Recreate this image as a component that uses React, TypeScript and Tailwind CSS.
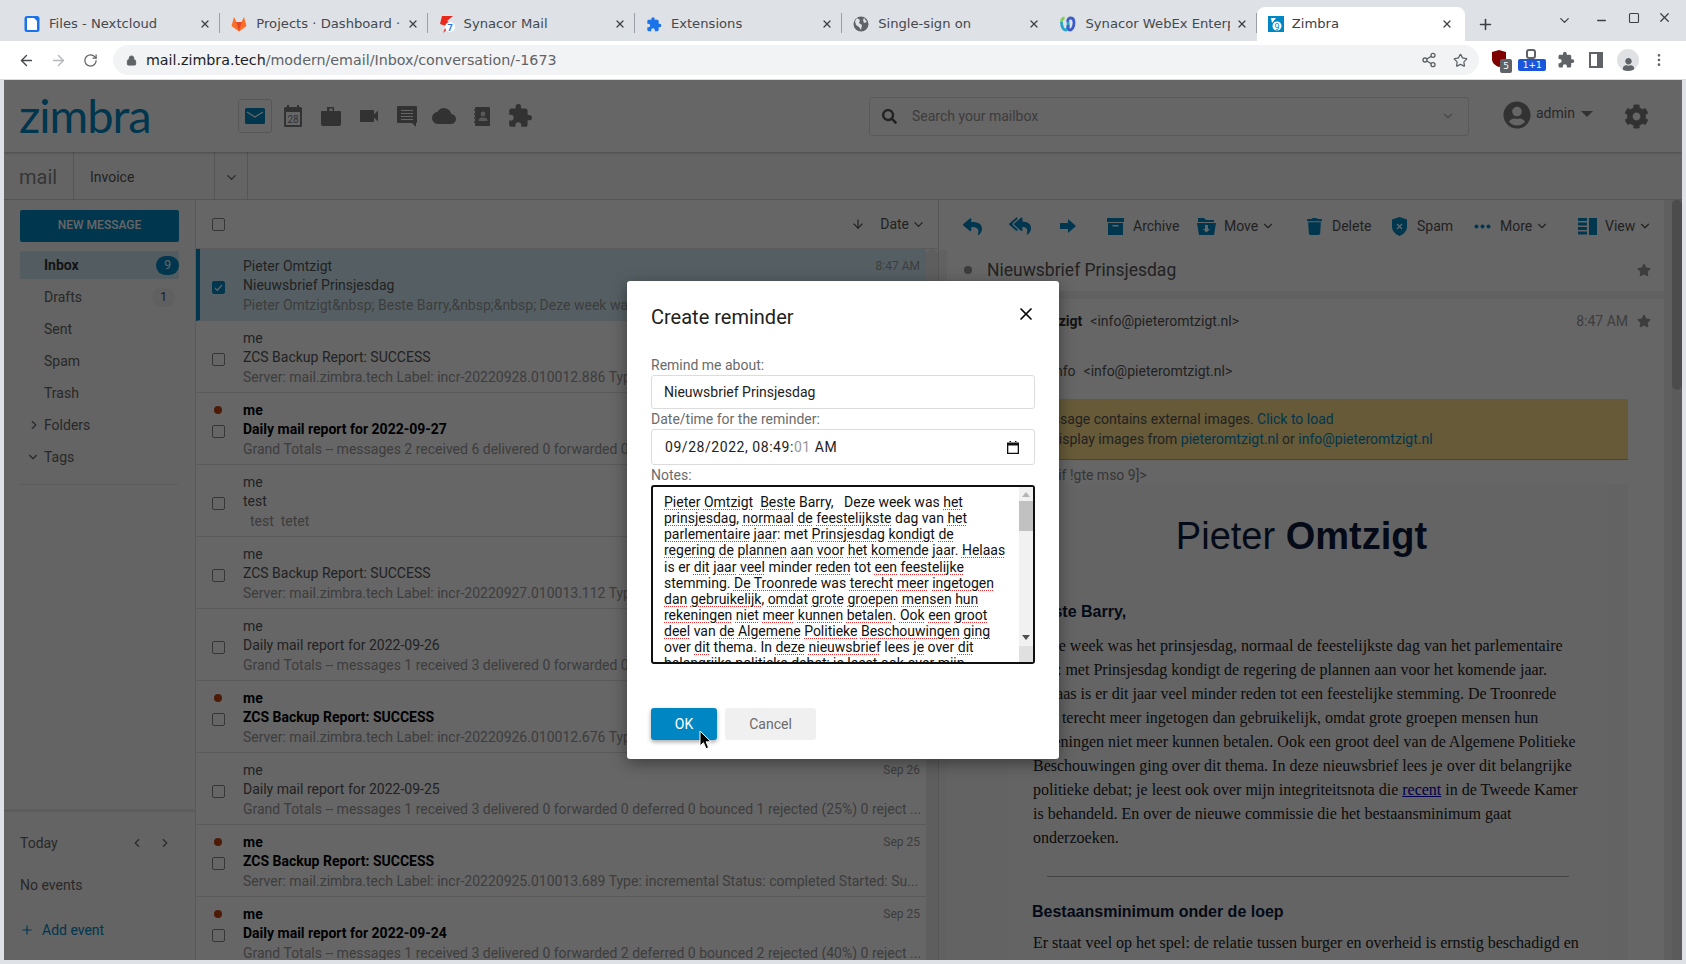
import React from "react";
import { FaReply, FaReplyAll, FaStar, FaTrash, FaCog, FaSearch, FaUser, FaUserCircle } from "react-icons/fa";
import { MdExtension, MdCloud, MdVideocam } from "react-icons/md";
import { ArrowLeft, ArrowRight, RotateCw, Lock, Share2, Star, Plus, X, ChevronDown, ChevronRight, ChevronLeft, ArrowDown, Minus, MoreVertical, Square } from "lucide-react";

interface Msg {
    from: string;
    subject: string;
    excerpt: string;
    date: string;
    unread?: boolean;
    selected?: boolean;
}

const messages: Msg[] = [
    { from: "Pieter Omtzigt", subject: "Nieuwsbrief Prinsjesdag", excerpt: "Pieter Omtzigt&nbsp; Beste Barry,&nbsp;&nbsp; Deze week was het prinsjesdag, normaal de feestelijkste dag van het", date: "8:47 AM", selected: true },
    { from: "me", subject: "ZCS Backup Report: SUCCESS", excerpt: "Server: mail.zimbra.tech Label: incr-20220928.010012.886 Type: incremental Status: completed Started: Su...", date: "Sep 28" },
    { from: "me", subject: "Daily mail report for 2022-09-27", excerpt: "Grand Totals -- messages 2 received 6 delivered 0 forwarded 0 deferred 0 bounced 1 rejected (14%) 0 reject ...", date: "Sep 27", unread: true },
    { from: "me", subject: "test", excerpt: "\u00a0\u00a0test\u00a0\u00a0tetet", date: "Sep 27" },
    { from: "me", subject: "ZCS Backup Report: SUCCESS", excerpt: "Server: mail.zimbra.tech Label: incr-20220927.010013.112 Type: incremental Status: completed Started: Su...", date: "Sep 27" },
    { from: "me", subject: "Daily mail report for 2022-09-26", excerpt: "Grand Totals -- messages 1 received 3 delivered 0 forwarded 0 deferred 0 bounced 1 rejected (25%) 0 reject ...", date: "Sep 26" },
    { from: "me", subject: "ZCS Backup Report: SUCCESS", excerpt: "Server: mail.zimbra.tech Label: incr-20220926.010012.676 Type: incremental Status: completed Started: Su...", date: "Sep 26", unread: true },
    { from: "me", subject: "Daily mail report for 2022-09-25", excerpt: "Grand Totals -- messages 1 received 3 delivered 0 forwarded 0 deferred 0 bounced 1 rejected (25%) 0 reject ...", date: "Sep 26" },
    { from: "me", subject: "ZCS Backup Report: SUCCESS", excerpt: "Server: mail.zimbra.tech Label: incr-20220925.010013.689 Type: incremental Status: completed Started: Su...", date: "Sep 25", unread: true },
    { from: "me", subject: "Daily mail report for 2022-09-24", excerpt: "Grand Totals -- messages 1 received 3 delivered 0 forwarded 2 deferred 0 bounced 2 rejected (40%) 0 reject ...", date: "Sep 25", unread: true },
];

const folders = ["Drafts", "Sent", "Spam", "Trash"];

const noteLines = [
    "Pieter Omtzigt\u00a0\u00a0Beste Barry,\u00a0\u00a0\u00a0Deze week was het",
    "prinsjesdag, normaal de feestelijkste dag van het",
    "parlementaire jaar: met Prinsjesdag kondigt de",
    "regering de plannen aan voor het komende jaar. Helaas",
    "is er dit jaar veel minder reden tot een feestelijke",
    "stemming. De Troonrede was terecht meer ingetogen",
    "dan gebruikelijk, omdat grote groepen mensen hun",
    "rekeningen niet meer kunnen betalen. Ook een groot",
    "deel van de Algemene Politieke Beschouwingen ging",
    "over dit thema. In deze nieuwsbrief lees je over dit",
    "belangrijke politieke debat; je leest ook over mijn",
];

// words the spell checker left alone
const okWords = ["Barry", "Deze", "week", "was", "dag", "van", "met", "is", "er", "minder", "tot", "stemming", "over", "thema", "In", "lees"];

const NoteLine = ({ text }: { text: string }) => (
    <div className="whitespace-pre h-[16.15px] leading-[16.15px]">
        {text.split(/([A-Za-z]+)/).map((w, i) =>
            !/^[A-Za-z]+$/.test(w) || okWords.includes(w) ? (
                <span key={i}>{w}</span>
            ) : (
                <span key={i} className="underline decoration-dotted decoration-[#e83030] decoration-1 underline-offset-[2px]">{w}</span>
            )
        )}
    </div>
);

const MailIcon = () => (
    <svg width="20" height="20" viewBox="0 0 20 20">
        <rect x="0" y="2" width="20" height="16" rx="1.5" fill="#0087c3" />
        <path d="M2 6l8 5 8-5" fill="none" stroke="#fff" strokeWidth="1.4" />
    </svg>
);

const CalIcon = () => (
    <svg width="18" height="22" viewBox="0 0 18 22">
        <rect x="0" y="2" width="18" height="20" rx="1.5" fill="#7d7d7d" />
        <rect x="3" y="0" width="2" height="4" fill="#7d7d7d" />
        <rect x="13" y="0" width="2" height="4" fill="#7d7d7d" />
        <rect x="2" y="7" width="14" height="13" fill="#fff" />
        <text x="9" y="18" textAnchor="middle" fontSize="10" fontFamily="Roboto, sans-serif" fill="#7d7d7d">28</text>
    </svg>
);

const BriefIcon = () => (
    <svg width="20" height="20" viewBox="0 0 20 20" fill="#7d7d7d">
        <path d="M7 1h6v4h6a1 1 0 011 1v12a2 2 0 01-2 2H2a2 2 0 01-2-2V6a1 1 0 011-1h5V1zm1.4 1.4V5h3.2V2.4H8.4z" fillRule="evenodd" />
    </svg>
);

const ChatIcon = () => (
    <svg width="21" height="21" viewBox="0 0 21 21">
        <path d="M1 0h18a1 1 0 011 1v15a1 1 0 01-1 1v4l-4-4H1a1 1 0 01-1-1V1a1 1 0 011-1z" fill="#7d7d7d" />
        <path d="M4 4.500h12M4 7.500h12M4 10.500h12M4 13.500h12" stroke="#fff" strokeWidth="1.2" />
    </svg>
);

const ContactIcon = () => (
    <svg width="16" height="19" viewBox="0 0 16 19">
        <rect x="1" y="0" width="15" height="19" rx="1" fill="#7d7d7d" />
        <path d="M0 3h3M0 7h3M0 11h3M0 15h3" stroke="#7d7d7d" strokeWidth="1.6" />
        <path d="M0.5 3h2M0.5 7h2M0.5 11h2M0.5 15h2" stroke="#bbb" strokeWidth="0.6" />
        <circle cx="9" cy="7" r="2.4" fill="#ddd" />
        <path d="M4.5 14c0-3 2-3.6 4.5-3.6s4.5.6 4.5 3.6z" fill="#ddd" />
    </svg>
);

const ForwardIcon = () => (
    <svg width="16" height="14" viewBox="0 0 16 14" fill="#0087c3"><path d="M0 4h8V0l8 7-8 7v-4H0z" /></svg>
);

const ArchiveIcon = () => (
    <svg width="17" height="17" viewBox="0 0 17 17" fill="#0087c3">
        <rect x="0" y="0" width="17" height="4" />
        <path d="M1 5h15v12H1zM5.5 7v1.6h6V7z" fillRule="evenodd" />
    </svg>
);

const MoveIcon = () => (
    <svg width="19" height="17" viewBox="0 0 19 17" fill="#0087c3">
        <path d="M1 0h6l2 2h8v2H1z" />
        <path d="M0 5h19l-2 12H2zM8 7v4H6l3.5 3.5L13 11h-2V7z" fillRule="evenodd" />
    </svg>
);

const ShieldIcon = () => (
    <svg width="15" height="19" viewBox="0 0 15 19">
        <path d="M7.5 0l7.5 2.5v7c0 4.5-3.5 7.8-7.5 9.5C3.5 17.300 0 14 0 9.500v-7z" fill="#0087c3" />
        <path d="M5 7l5 5M10 7l-5 5" stroke="#fff" strokeWidth="1.3" />
    </svg>
);

const ViewIcon = () => (
    <svg width="19" height="17" viewBox="0 0 19 17" fill="#0087c3">
        <rect x="0" y="0" width="9" height="3" />
        <rect x="0" y="4.500" width="9" height="3" />
        <rect x="0" y="9" width="9" height="3" />
        <rect x="0" y="13.500" width="9" height="3" />
        <rect x="11" y="0" width="8" height="17" />
    </svg>
);

const Check = ({ checked }: { checked?: boolean }) => (
    <div className={`w-[13px] h-[13px] rounded-[2px] border flex items-center justify-center ${checked ? "bg-[#0087c3] border-[#0087c3]" : "border-[#888] bg-white"}`}>
        {checked && (
            <svg width="9" height="9" viewBox="0 0 9 9"><path d="M1 5l2.300 2.300L8 2" fill="none" stroke="#fff" strokeWidth="1.2" /></svg>
        )}
    </div>
);

const Favicon = ({ kind }: { kind: string }) => {
    if (kind === "files")
        return (
            <svg width="16" height="16" viewBox="0 0 16 16"><rect x="0.500" y="0" width="15" height="16" rx="2.500" fill="#1a73e8" /><path d="M3 2h7l3 3v9H3z" fill="#fff" /></svg>
        );
    if (kind === "gitlab")
        return (
            <svg width="16" height="16" viewBox="0 0 16 16"><path d="M8 15.500L0.500 10 3 1l2.500 5h5L13 1l2.500 9z" fill="#fc6d26" /><path d="M8 15.500L5.500 6h5z" fill="#e24329" /></svg>
        );
    if (kind === "synacor")
        return (
            <svg width="16" height="17" viewBox="0 0 16 17"><path d="M3 0h11L8 5l6 3-10 9 3-7-6-2z" fill="#e8291c" /><circle cx="11" cy="11" r="5" fill="#fff" /><text x="11" y="14.500" fontSize="9" textAnchor="middle" fontWeight="700" fontFamily="Roboto, sans-serif" fill="#1a73e8">7</text></svg>
        );
    if (kind === "ext") return <MdExtension size={17} color="#1a73e8" />;
    if (kind === "globe")
        return (
            <svg width="16" height="16" viewBox="0 0 16 16"><circle cx="8" cy="8" r="7.500" fill="#5f6368" /><path d="M4 2l3 2-1 3 3 2-1 5-2-3-3-2-1-4zM11 2l3 4-3 1-1-3z" fill="#dee1e6" /></svg>
        );
    if (kind === "webex")
        return (
            <svg width="16" height="16" viewBox="0 0 16 16" fill="none" strokeWidth="2.800"><path d="M1.500 6c0 6 2.500 8 4 8S9 11 8 6" stroke="#28a4c8" /><path d="M8 6c-1-3 1-4 3-4s3 2 3 5c0 4-2 7-4 7S8 11 8 9" stroke="#3c5ccc" /><path d="M1.500 6c0-2 1-4 3-4" stroke="#7fd14a" /></svg>
        );
    return (
        <svg width="16" height="16" viewBox="0 0 16 16"><rect width="16" height="16" fill="#0087c3" /><circle cx="9" cy="10" r="4.500" fill="#fff" /><text x="9" y="13.500" textAnchor="middle" fontSize="9" fontFamily="Roboto, sans-serif" fill="#0087c3">9</text><path d="M3 2h5L4 7z" fill="#fff" /></svg>
    );
};

const tabs = [
    { title: "Files - Nextcloud", icon: "files" },
    { title: "Projects · Dashboard · GitLab", icon: "gitlab" },
    { title: "Synacor Mail", icon: "synacor" },
    { title: "Extensions", icon: "ext" },
    { title: "Single-sign on", icon: "globe" },
    { title: "Synacor WebEx Enterprise", icon: "webex" },
];

const BrowserChrome = () => (
    <div className="shrink-0 font-['DejaVu_Sans',sans-serif] text-[#45494e]">
        <div className="h-[41px] bg-[#dee1e6] flex items-end pl-[13px]">
            {tabs.map((t, i) => (
                <div key={i} className="relative w-[207.300px] h-[34px] flex items-center pl-[11px] pr-[9px]">
                    <div className="w-[16px] flex justify-center shrink-0"><Favicon kind={t.icon} /></div>
                    <span className="ml-[9px] text-[13.150px] whitespace-nowrap overflow-hidden flex-1">{t.title}</span>
                    <X size={12} strokeWidth={2.500} className="ml-[6px] shrink-0 text-[#3c4043]" />
                    {i !== 4 && <div className="absolute right-0 top-[6px] w-px h-[20px] bg-[#9aa0a6]" />}
                </div>
            ))}
            <div className="w-[208px] h-[34px] bg-white rounded-t-[8px] flex items-center pl-[11px] pr-[9px] text-[#3c4043]">
                <Favicon kind="zimbra" />
                <span className="ml-[8px] text-[13.150px] flex-1">Zimbra</span>
                <X size={12} strokeWidth={2.500} className="mr-[3px]" />
            </div>
            <div className="h-[34px] flex items-center ml-[12px] text-[#3c4043]">
                <Plus size={17} strokeWidth={2.200} />
            </div>
            <div className="h-[41px] flex-1 flex items-center justify-end pr-[14px] text-[#3c4043]">
                <ChevronDown size={15} className="-ml-[1px]" />
                <Minus size={13} strokeWidth={2.500} className="ml-[23px]" />
                <Square size={12} strokeWidth={2.200} className="ml-[20px] -mt-[6px]" />
                <X size={15} className="ml-[17px] -mt-[6px]" />
            </div>
        </div>
        <div className="h-[39px] bg-white flex items-center pl-[18px] pr-[19px] text-[#5f6368] border-b border-[#dadce0]">
            <ArrowLeft size={17} className="text-[#45494e] mt-[1px]" />
            <ArrowRight size={17} className="ml-[15px] text-[#b5b8bb] mt-[1px]" />
            <RotateCw size={15} className="ml-[16px] mt-[1px]" />
            <div className="ml-[15px] w-[1369px] h-[30px] rounded-full bg-[#f1f3f4] flex items-center pl-[13px] pr-[11px]">
                <Lock size={11} fill="#5f6368" className="shrink-0" />
                <span className="ml-[9px] mt-[1px] text-[14.250px] flex-1 whitespace-nowrap">
                    <span className="text-[#202124]">mail.zimbra.tech</span>/modern/email/Inbox/conversation/-1673
                </span>
                <Share2 size={16} />
                <Star size={15} className="ml-[16px]" />
            </div>
            <div className="relative ml-[13px] w-[18px] h-[20px]">
                <svg width="14" height="17" viewBox="0 0 14 17"><path d="M7 0l7 2v7c0 4-3 6.500-7 8-4-1.500-7-4-7-8V2z" fill="#800000" /></svg>
                <div className="absolute left-[8px] top-[9px] w-[12px] h-[14px] bg-[#5f6368] rounded-[2px] text-white text-[9px] leading-[14px] text-center">5</div>
            </div>
            <div className="relative ml-[8px] w-[26px] h-[22px] flex justify-center">
                <div className="w-[10px] h-[10px] border-2 border-[#5f6368] rounded-[3px]" />
                <div className="absolute left-0 top-[10px] w-[28px] h-[12px] bg-[#1a56db] rounded-[2px] text-white text-[9px] leading-[12px] text-center">1+1</div>
            </div>
            <MdExtension size={18} className="ml-[13px]" />
            <div className="ml-[14px] w-[14px] h-[16px] border-2 border-[#5f6368] flex justify-end"><div className="w-[4px] bg-[#5f6368]" /></div>
            <div className="ml-[14px] w-[22px] h-[22px] rounded-full bg-[#dfe1e5] flex items-end justify-center overflow-hidden"><FaUser size={13} /></div>
            <MoreVertical size={16} className="ml-[12px]" />
        </div>
    </div>
);

const AppHeader = () => (
    <div className="h-[72px] shrink-0 bg-white flex items-center shadow-[0_1px_3px_rgba(0,0,0,0.25)] relative z-10">
        <div className="ml-[15px] w-[219px] -mt-[2px] font-['Lato',sans-serif] font-normal text-[47px] leading-none tracking-[-1px] text-[#0087c3]">zimbra</div>
        <div className="w-[34px] h-[34px] border border-[#d8d8d8] rounded-[3px] flex items-center justify-center"><MailIcon /></div>
        <div className="flex items-center ml-[12px]"><div className="w-[18px] flex justify-center"><CalIcon /></div></div>
        <div className="ml-[19px]"><BriefIcon /></div>
        <div className="ml-[16px]"><MdVideocam size={24} color="#7d7d7d" /></div>
        <div className="ml-[16px]"><ChatIcon /></div>
        <div className="ml-[14px]"><MdCloud size={24} color="#7d7d7d" /></div>
        <div className="ml-[18px]"><ContactIcon /></div>
        <div className="ml-[17px]"><MdExtension size={26} color="#7d7d7d" /></div>
        <div className="ml-[336px] w-[600px] h-[39px] border border-[#e0e0e0] rounded-[3px] flex items-center pl-[12px] pr-[13px]">
            <FaSearch size={15} className="text-[#555]" />
            <span className="ml-[15px] text-[14px] text-[#999] flex-1">Search your mailbox</span>
            <ChevronDown size={14} className="text-[#aaa]" />
        </div>
        <div className="ml-[34px] flex items-center -mt-[3px]">
            <FaUserCircle size={28} color="#7d7d7d" />
            <span className="ml-[5px] text-[14px] text-[#666] -mt-[2px]">admin</span>
            <div className="ml-[6px] -mt-[2px] w-0 h-0 border-l-[6px] border-r-[6px] border-t-[6px] border-l-transparent border-r-transparent border-t-[#7d7d7d]" />
        </div>
        <FaCog size={25} color="#7d7d7d" className="ml-[31px]" />
    </div>
);

const SubHeader = () => (
    <div className="h-[48px] shrink-0 bg-[#fbfbfb] border-b border-[#d4d4d4] flex items-stretch">
        <div className="w-[70px] pl-[15px] pt-[2px] flex items-center border-r border-[#d4d4d4] text-[20px] text-[#888]">mail</div>
        <div className="w-[141px] pl-[16px] pt-[3px] flex items-center border-r border-[#d4d4d4] text-[14px] text-[#555]">Invoice</div>
        <div className="w-[33px] pt-[3px] flex items-center justify-center border-r border-[#d4d4d4] text-[#666]"><ChevronDown size={15} /></div>
    </div>
);

const Sidebar = () => (
    <div className="w-[192px] shrink-0 bg-[#f9f9f9] border-r border-[#e0e0e0] flex flex-col text-[14px] text-[#666]">
        <div className="flex-1 px-[16px] pt-[10px]">
            <div className="h-[32px] pb-[2px] rounded-[2px] bg-[#0087c3] text-white text-[12px] font-medium flex items-center justify-center">NEW MESSAGE</div>
            <div className="mt-[9px] h-[28px] rounded-[2px] bg-[#cfe6f1] flex items-center pl-[24px] pr-0 font-bold text-[#333]">
                <span className="flex-1">Inbox</span>
                <div className="w-[23px] h-[19px] rounded-full bg-[#0087c3] text-white text-[12px] font-normal flex items-center justify-center">9</div>
            </div>
            {folders.map((f, i) => (
                <div key={f} className="mt-[4px] h-[28px] flex items-center pl-[24px] pr-[4px]">
                    <span className="flex-1">{f}</span>
                    {i === 0 && <div className="w-[23px] h-[19px] rounded-full bg-[#f0f0f0] text-[#444] text-[12px] flex items-center justify-center">1</div>}
                </div>
            ))}
            <div className="mt-[4px] h-[28px] flex items-center">
                <ChevronRight size={14} className="ml-[7px]" />
                <span className="ml-[3px]">Folders</span>
            </div>
            <div className="mt-[4px] h-[28px] flex items-center">
                <ChevronDown size={14} className="ml-[6px]" />
                <span className="ml-[4px]">Tags</span>
            </div>
            <div className="mt-[13px] h-px bg-[#e8e8e8]" />
        </div>
        <div className="h-[151px] shrink-0 border-t-[3px] border-[#e8e8e8] pl-[16px] pr-[16px]">
            <div className="mt-[19px] h-[24px] flex items-center">
                <span className="flex-1">Today</span>
                <ChevronLeft size={14} className="mr-[14px]" />
                <ChevronRight size={14} className="mr-[7px]" />
            </div>
            <div className="mt-[18px] h-[24px] flex items-center">No events</div>
            <div className="mt-[21px] h-[24px] flex items-center text-[#0087c3]">
                <Plus size={14} />
                <span className="ml-[8px]">Add event</span>
            </div>
        </div>
    </div>
);

const MessageRow = ({ m }: { m: Msg }) => (
    <div className={`h-[72px] shrink-0 flex border-b ${m.selected ? "bg-[#d5eef8] border-l-4 border-l-[#0087c3] border-b-[#dde6ea]" : "border-b-[#e2e2e2]"}`}>
        <div className={`${m.selected ? "w-[36px] mr-[4px]" : "w-[44px]"} shrink-0 flex flex-col items-center`}>
            <div className="h-[32px] flex justify-center">
                {m.unread && <div className="mt-[13px] w-[8px] h-[8px] rounded-full bg-[#c0410f]" />}
            </div>
            <Check checked={m.selected} />
        </div>
        <div className="ml-[3px] flex-1 min-w-0 pt-[8px] pr-[6px] text-[14px]">
            <div className={`h-[19px] leading-[19px] flex ${m.unread ? "font-bold text-black" : "text-[#555]"}`}>
                <span className="flex-1">{m.from}</span>
                <span className="text-[12px] font-normal text-[#999]">{m.date}</span>
            </div>
            <div className={`h-[19px] leading-[19px] ${m.unread ? "font-bold text-black" : "text-[#555]"}`}>{m.subject}</div>
            <div className="h-[20px] leading-[20px] text-[#999] whitespace-nowrap overflow-hidden">{m.excerpt}</div>
        </div>
    </div>
);

const MessageList = () => (
    <div className="w-[743px] shrink-0 flex flex-col overflow-hidden border-r border-[#d4d4d4]">
        <div className="h-[49px] shrink-0 flex items-center pl-[16px] border-b border-[#e2e2e2]">
            <Check />
            <div className="flex-1" />
            <ArrowDown size={14} className="text-[#555]" />
            <span className="ml-[15px] text-[14px] text-[#555]">Date</span>
            <ChevronDown size={15} className="ml-[2px] mr-[12px] text-[#555]" />
        </div>
        <div className="flex-1 flex min-h-0">
            <div className="flex-1 min-w-0 flex flex-col overflow-hidden">
                {messages.map((m, i) => <MessageRow key={i} m={m} />)}
            </div>
            <div className="w-[12px] shrink-0 bg-[#ececec] rounded-t-[6px]" />
        </div>
    </div>
);

const actions = [
    { icon: <ArchiveIcon />, label: "Archive", cls: "ml-[29px] w-[91px]" },
    { icon: <MoveIcon />, label: "Move", caret: true, cls: "w-[108px]" },
    { icon: <FaTrash size={17} color="#0087c3" />, label: "Delete", cls: "w-[85px]" },
    { icon: <ShieldIcon />, label: "Spam", cls: "w-[83px]" },
    { icon: <svg width="17" height="5" viewBox="0 0 17 5" fill="#0087c3"><circle cx="2.500" cy="2.500" r="2" /><circle cx="8.500" cy="2.500" r="2" /><circle cx="14.500" cy="2.500" r="2" /></svg>, label: "More", caret: true, cls: "w-[105px]" },
    { icon: <ViewIcon />, label: "View", caret: true, cls: "" },
];

const ReadingPane = () => (
    <div className="flex-1 min-w-0 flex overflow-hidden bg-[#f2f2f2]">
        <div className="w-[725px] shrink-0 pl-[8px] flex flex-col overflow-hidden">
            <div className="h-[50px] shrink-0 -ml-[8px] pl-[23px] pt-[2px] bg-white flex items-center text-[14px] text-[#555]">
                <div className="w-[20px] flex justify-center"><FaReply size={19} color="#0087c3" /></div>
                <div className="ml-[25px] w-[26px] flex justify-center"><FaReplyAll size={22} color="#0087c3" /></div>
                <div className="ml-[26px] w-[18px] flex justify-center"><ForwardIcon /></div>
                {actions.map((a) => (
                    <div key={a.label} className={`flex items-center shrink-0 ${a.cls}`}>
                        <div className="w-[19px] flex justify-center">{a.icon}</div>
                        <span className="ml-[8px]">{a.label}</span>
                        {a.caret && <ChevronDown size={14} className="ml-[3px]" />}
                    </div>
                ))}
            </div>
            <div className="h-[41px] shrink-0 w-[718px] bg-white flex items-center pl-[17px] pr-[14px] pb-[1px] text-[#555]">
                <div className="w-[8px] h-[8px] rounded-full bg-[#999]" />
                <span className="ml-[15px] text-[17.500px] flex-1">Nieuwsbrief Prinsjesdag</span>
                <FaStar size={14} color="#999" />
            </div>
            <div className="mt-[8px] flex-1 w-[718px] bg-white overflow-hidden">
                <div className="h-[44px] flex items-center pl-[44px] pr-[14px] text-[14px] text-[#555]">
                    <span className="font-bold text-[#333]">Pieter Omtzigt</span>
                    <span className="ml-[8px] flex-1">&lt;info@pieteromtzigt.nl&gt;</span>
                    <span className="text-[#999]">8:47 AM</span>
                    <FaStar size={14} color="#999" className="ml-[9px]" />
                </div>
                <div className="mt-[6px] h-[44px] flex items-center pl-[82px] text-[14px] text-[#555]">
                    <span>To: info</span>
                    <span className="ml-[8px]">&lt;info@pieteromtzigt.nl&gt;</span>
                </div>
                <div className="mt-[6px] mr-[37px] ml-[21px] h-[61px] bg-[#ffe08c] border-b border-[#e6a63b] pl-[35px] pt-[10px] text-[14px] leading-[20px] text-[#555]">
                    <div>This message contains external images. <span className="text-[#0087c3]">Click to load</span></div>
                    <div>Always display images from <span className="text-[#0087c3]">pieteromtzigt.nl</span> or <span className="text-[#0087c3]">info@pieteromtzigt.nl</span></div>
                </div>
                <div className="ml-[89px] h-[24px] leading-[30px] text-[14px] text-[#888]">&lt;!--[if !gte mso 9]&gt;</div>
                <div className="w-[681px] flex bg-[#f7f7fb]">
                    <div className="ml-[61px] w-[600px] h-[480px] bg-[#fbfbfb] overflow-hidden pl-[25px] pr-[22px]">
                        <div className="mt-[30px] mr-[15px] text-center font-['Liberation_Sans',sans-serif] text-[38px] leading-[44px] text-[#0c1a3a] -ml-[1px]">
                            Pieter <b>Omtzigt</b>
                        </div>
                        <div className="mt-[42px] font-['Liberation_Sans',sans-serif] font-bold text-[16px] leading-[24px] text-[#0c1a3a]">Beste Barry,</div>
                        <p className="mt-[10px] font-['Liberation_Serif',serif] text-[16px] leading-[24px] text-[#222] whitespace-pre-line w-[560px]">
                            {"Deze week was het prinsjesdag, normaal de feestelijkste dag van het parlementaire\njaar: met Prinsjesdag kondigt de regering de plannen aan voor het komende jaar.\nHelaas is er dit jaar veel minder reden tot een feestelijke stemming. De Troonrede\nwas terecht meer ingetogen dan gebruikelijk, omdat grote groepen mensen hun\nrekeningen niet meer kunnen betalen. Ook een groot deel van de Algemene Politieke\nBeschouwingen ging over dit thema. In deze nieuwsbrief lees je over dit belangrijke\npolitieke debat; je leest ook over mijn integriteitsnota die "}
                            <span className="underline text-[#0000c0]">recent</span>
                            {" in de Tweede Kamer\nis behandeld. En over de nieuwe commissie die het bestaansminimum gaat\nonderzoeken."}
                        </p>
                        <div className="mt-[26px] ml-[14px] w-[522px] h-px bg-[#a8a8b0]" />
                        <div className="mt-[23px] -ml-[1px] font-['Liberation_Sans',sans-serif] font-bold text-[16px] leading-[24px] text-[#0c1a3a]">Bestaansminimum onder de loep</div>
                        <p className="mt-[7px] font-['Liberation_Serif',serif] text-[16px] leading-[24px] text-[#222] whitespace-nowrap">Er staat veel op het spel: de relatie tussen burger en overheid is ernstig beschadigd en</p>
                    </div>
                </div>
            </div>
        </div>
        <div className="w-[8px] shrink-0 bg-[#ededed]" />
        <div className="w-[10px] shrink-0 bg-[#e4e4e4]">
            <div className="h-[190px] rounded-full bg-[#bdbdbd]" />
        </div>
    </div>
);

const ReminderModal = () => (
    <div className="absolute left-[623px] top-[201px] w-[432px] h-[478px] bg-white rounded-[3px] shadow-[0_4px_16px_rgba(0,0,0,0.4)] px-[24px] text-[14px] text-[#6b6b6b]">
        <div className="flex items-center h-[72px]">
            <h2 className="flex-1 text-[20px] font-normal text-[#222]">Create reminder</h2>
            <X size={20} strokeWidth={2} className="text-black mr-[-1px] -mt-[6px]" />
        </div>
        <div className="h-[22px] leading-[24px]">Remind me about:</div>
        <div className="h-[34px] border border-[#dcdcdc] rounded-[3px] flex items-center pl-[12px] text-[#222]">Nieuwsbrief Prinsjesdag</div>
        <div className="h-[20px] leading-[20px]">Date/time for the reminder:</div>
        <div className="h-[36px] border border-[#dcdcdc] rounded-[3px] flex items-center pl-[13px] pr-[15px] text-[#222] tracking-[0.55px]">
            <span className="flex-1">09/28/2022, 08:49:<span className="text-[#999]">01</span> AM</span>
            <svg width="12" height="13" viewBox="0 0 12 13"><path d="M0 1.500h12V13H0zM1.300 4.500v7.200h9.400V4.500zM2.500 0h1.500v2H2.500zM8 0h1.500v2H8z" fill="#111" fillRule="evenodd" /></svg>
        </div>
        <div className="h-[20px] leading-[20px]">Notes:</div>
        <div className="h-[179px] border-2 border-[#101010] rounded-[3px] flex overflow-hidden text-[#111]">
            <div className="flex-1 pt-[7px] pl-[11px] overflow-hidden whitespace-nowrap">
                {noteLines.map((l, i) => <NoteLine key={i} text={l} />)}
            </div>
            <div className="w-[14px] shrink-0 bg-[#f1f1f1] flex flex-col items-center">
                <div className="mt-[5px] w-0 h-0 border-l-[4px] border-r-[4px] border-b-[5px] border-l-transparent border-r-transparent border-b-[#b4b4b4]" />
                <div className="mt-[4px] w-full h-[30px] bg-[#c1c1c1]" />
                <div className="mt-[104px] w-0 h-0 border-l-[4px] border-r-[4px] border-t-[5px] border-l-transparent border-r-transparent border-t-[#505050]" />
                <div className="mt-[6px] w-full flex-1 bg-[#e0e0e0]" />
            </div>
        </div>
        <div className="mt-[44px] flex">
            <div className="w-[66px] h-[32px] rounded-[3px] bg-[#0087c3] text-white flex items-center justify-center shadow-[0_2px_4px_rgba(0,0,0,0.35)]">OK</div>
            <div className="ml-[8px] w-[91px] h-[32px] rounded-[3px] bg-[#f0f0f0] flex items-center justify-center">Cancel</div>
        </div>
        <svg className="absolute left-[72px] top-[449px]" width="14" height="20" viewBox="0 0 14 20">
            <path d="M1 1v15l3.500-3.300 2.500 6 2.600-1.100-2.500-5.800H12z" fill="#000" stroke="#fff" strokeWidth="1" />
        </svg>
    </div>
);

export default function App() {
    return (
        <div className="h-[964px] w-[1686px] overflow-hidden flex flex-col bg-[#dee1e6] font-['Roboto',sans-serif]">
            <BrowserChrome />
            <div className="flex-1 min-h-0 mx-[4px] mb-[4px] relative flex flex-col bg-white overflow-hidden">
                <AppHeader />
                <SubHeader />
                <div className="flex-1 min-h-0 flex">
                    <Sidebar />
                    <MessageList />
                    <ReadingPane />
                </div>
                <div className="absolute inset-0 bg-black/60 z-20" />
                <div className="absolute inset-0 z-30">
                    <ReminderModal />
                </div>
            </div>
        </div>
    );
}
